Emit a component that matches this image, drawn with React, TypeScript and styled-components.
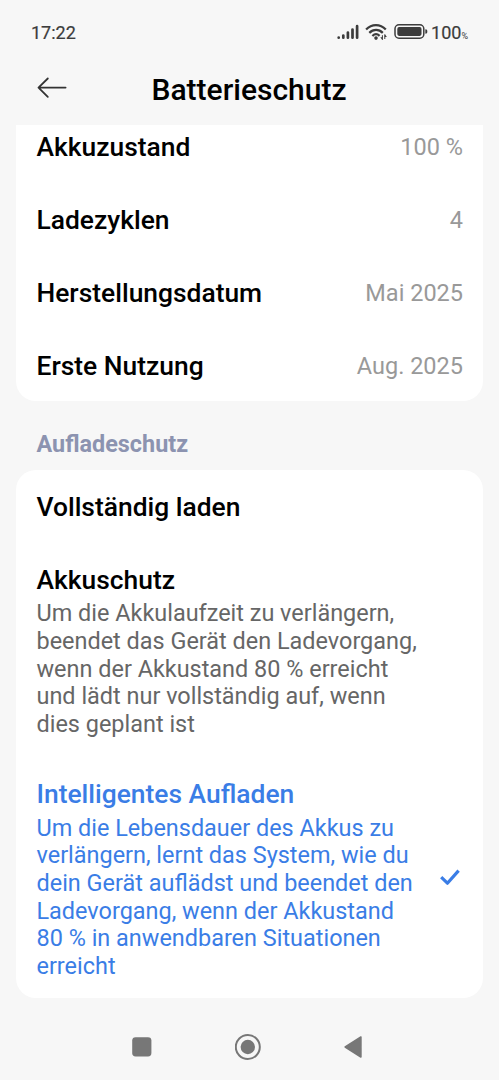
import React from 'react';
import styled, { createGlobalStyle } from 'styled-components';

const Global = createGlobalStyle`
  * { box-sizing: border-box; }
  body { margin: 0; background: #f7f7f7; font-family: Roboto, sans-serif; color: #000; }
  svg { display: block; flex: none; }
`;
const Screen = styled.div`
  width: 499px; height: 1080px; display: flex; flex-direction: column; overflow: hidden;
`;
const StatusBar = styled.div`
  height: 62px; padding: 2px 31px 0 31px; display: flex; align-items: center; justify-content: space-between;
  font-size: 18px; font-weight: 400; color: #3c3c3c; -webkit-text-stroke: 0.2px #3c3c3c;
`;
const StatusIcons = styled.div`display: flex; align-items: center; gap: 6px;`;
const Percent = styled.span`
  margin-left: -3px; font-size: 18px;
  small { font-size: 9px; -webkit-text-stroke: 0; }
`;
const Header = styled.header`
  height: 63px; display: flex; align-items: center; padding: 0 37px 11px;
`;
const Title = styled.h1`
  margin: 4px 31px 0 0; flex: 1; text-align: center; font-size: 30px; font-weight: 500; line-height: 36px;
`;
const Card = styled.section<{ $cut?: boolean }>`
  margin: 0 16px; background: #fff; border-radius: ${p => (p.$cut ? '0 0 20px 20px' : '20px')};
`;
const InfoCard = styled(Card)`height: 276px; overflow: hidden;`;
const InfoRow = styled.div`
  height: 73px; padding: 0 20px 0 20.5px; display: flex; align-items: center; justify-content: space-between;
  &:first-child { margin-top: -15px; }
`;
const Label = styled.span`display: block; font-size: 26.4px; font-weight: 500; line-height: 32px;`;
const Value = styled.span`font-size: 23.5px; color: #999;`;
const SectionTitle = styled.h2`
  margin: 0; height: 69px; padding: 28px 36.5px 0; font-size: 23.4px; font-weight: 700; line-height: 30px; color: #8c93b0;
`;
const OptionCard = styled(Card)`height: 528px; padding: 21px 20px 0 20.5px;`;
const Option = styled.div<{ $active?: boolean }>`
  display: flex; align-items: center; justify-content: space-between;
  padding-right: 3px;
  color: ${p => (p.$active ? '#3a7de6' : '#000')};
  & + & { margin-top: 41px; }
  & + & + & { margin-top: 39.6px; }
`;
const Description = styled.p<{ $active?: boolean }>`
  margin: 4.4px 0 0; font-size: 23.45px; line-height: 27.65px; white-space: nowrap;
  color: ${p => (p.$active ? '#3a7de6' : '#666')};
`;
const NavBar = styled.nav`
  height: 82px; display: flex; align-items: center; padding: 16px 0 0 132px;
`;
const NavButton = styled.button`
  border: 0; padding: 0; background: none; margin-right: 83px; color: #777;
`;

const SignalIcon = () => (
  <svg width="22" height="16" viewBox="0 0 22 16" stroke="#3c3c3c" strokeWidth="2.7" strokeLinecap="round">
    <path d="M1.7 13.6v.1M6.3 11.6v2.1M10.9 8.6v5.1M15.5 5.5v8.2M20.1 2.2v11.5" />
  </svg>
);
const WifiIcon = () => (
  <svg width="23" height="18" viewBox="0 0 23 18" fill="none" stroke="#3c3c3c" strokeWidth="2.2">
    <path d="M1.1 6.6C6.7.5 15.2.5 20.8 6.6M4.3 9.9C8.3 5.9 13.8 5.9 17.8 9.9M7.4 13.1c2.2-2.3 5-2.3 7.2-.2" />
    <circle cx="11" cy="15.1" r="1.8" fill="#3c3c3c" stroke="none" />
    <path d="M17.4 12.2v4.6M19.8 11.4v4.6" strokeWidth="1" />
    <path d="M15.3 14.2h2.1v2.8zM19.8 11.2v2.8h2.1z" fill="#3c3c3c" stroke="none" />
  </svg>
);
const BatteryIcon = () => (
  <svg width="34" height="16" viewBox="0 0 34 16">
    <rect x="1" y=".8" width="28.8" height="13.4" rx="4" fill="none" stroke="#3c3c3c" strokeWidth="1.5" />
    <rect x="3.3" y="3.1" width="24.2" height="8.8" rx="1.8" fill="#3c3c3c" />
    <path d="M31.3 5.3c1.6 0 2 .7 2 2.2s-.4 2.2-2 2.2z" fill="#3c3c3c" />
  </svg>
);

const info = [['Akkuzustand', '100 %'], ['Ladezyklen', '4'], ['Herstellungsdatum', 'Mai 2025'], ['Erste Nutzung', 'Aug. 2025']];
const options = [
  { title: 'Vollständig laden', lines: [] as string[] },
  { title: 'Akkuschutz', lines: ['Um die Akkulaufzeit zu verlängern,', 'beendet das Gerät den Ladevorgang,', 'wenn der Akkustand 80 % erreicht', 'und lädt nur vollständig auf, wenn', 'dies geplant ist'] },
  { title: 'Intelligentes Aufladen', active: true, lines: ['Um die Lebensdauer des Akkus zu', 'verlängern, lernt das System, wie du', 'dein Gerät auflädst und beendet den', 'Ladevorgang, wenn der Akkustand', '80 % in anwendbaren Situationen', 'erreicht'] },
];

export default function App() {
  return (
    <Screen>
      <Global />
      <StatusBar>
        <span>17:22</span>
        <StatusIcons>
          <SignalIcon />
          <WifiIcon />
          <BatteryIcon />
          <Percent>100<small>%</small></Percent>
        </StatusIcons>
      </StatusBar>
      <Header>
        <svg width="30" height="22" viewBox="0 0 30 22" fill="none" stroke="#333" strokeWidth="1.8" strokeLinecap="round" strokeLinejoin="round"><path d="M28.6 10.6H1.5M10.8 1.5L1.5 10.6l9.3 9.3" /></svg>
        <Title>Batterieschutz</Title>
      </Header>
      <InfoCard $cut>
        {info.map(([k, v]) => <InfoRow key={k}><Label>{k}</Label><Value>{v}</Value></InfoRow>)}
      </InfoCard>
      <SectionTitle>Aufladeschutz</SectionTitle>
      <OptionCard>
        {options.map(o => (
          <Option key={o.title} $active={o.active}>
            <div>
              <Label>{o.title}</Label>
              {o.lines.length > 0 && <Description $active={o.active}>{o.lines.map(l => <React.Fragment key={l}>{l}<br /></React.Fragment>)}</Description>}
            </div>
            {o.active && (
              <svg width="20" height="20" viewBox="0 0 20 20" fill="none" stroke="currentColor" strokeWidth="3.2" strokeLinejoin="round"><path d="M1.2 8.2l6.2 6L18.6 1.6" /></svg>
            )}
          </Option>
        ))}
      </OptionCard>
      <NavBar>
        <NavButton aria-label="Übersicht">
          <svg width="20" height="20" viewBox="0 0 20 20"><rect x=".2" y=".2" width="19.2" height="19.2" rx="3.4" fill="currentColor" /></svg>
        </NavButton>
        <NavButton aria-label="Startbildschirm">
          <svg width="26" height="26" viewBox="0 0 26 26"><circle cx="12.8" cy="13" r="12" fill="none" stroke="currentColor" strokeWidth="2" /><circle cx="12.8" cy="13" r="7.2" fill="currentColor" /></svg>
        </NavButton>
        <NavButton aria-label="Zurück">
          <svg width="18" height="22" viewBox="0 0 18 22"><path d="M16.9 1v20L1.2 11z" fill="currentColor" stroke="currentColor" strokeWidth="1.6" strokeLinejoin="round" /></svg>
        </NavButton>
      </NavBar>
    </Screen>
  );
}
